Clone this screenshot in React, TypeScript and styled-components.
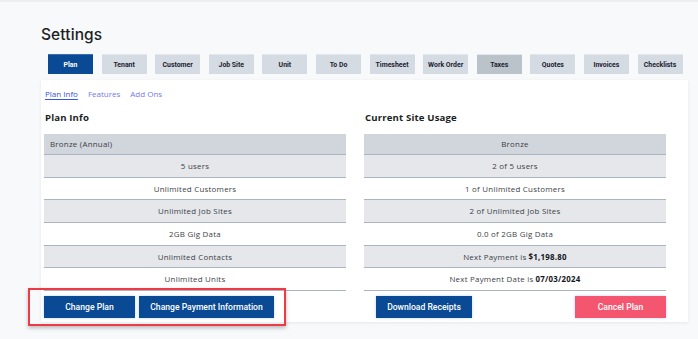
import React from "react";
import styled, { createGlobalStyle } from "styled-components";

const Global = createGlobalStyle`
  html, body { margin: 0; padding: 0; background: #f8f9fb; }
  body { font-family: "Open Sans", sans-serif; }
`;

const Page = styled.div`
  width: 698px;
  height: 339px;
  box-sizing: border-box;
  border-top: 2px solid #eceef2;
  padding: 23px 10px 0 41px;
  overflow: hidden;
`;

const Title = styled.h1`
  margin: 0;
  font-family: Inter, sans-serif;
  font-weight: 500;
  font-size: 15.5px;
  line-height: 20px;
  color: #1c1f24;
  letter-spacing: 0.1px;
`;

const TabBar = styled.div`
  display: flex;
  gap: 8.6px;
  margin: 9px 0 0 7px;
`;

const Tab = styled.div<{ $active?: boolean; $dim?: boolean }>`
  width: 45px;
  height: 20px;
  box-sizing: border-box;
  display: flex;
  align-items: center;
  justify-content: center;
  font-family: Roboto, sans-serif;
  font-weight: 700;
  font-size: 6.9px;
  color: ${(p) => (p.$active ? "#ffffff" : "#1d2230")};
  background: ${(p) => (p.$active ? "#0a4a94" : p.$dim ? "#bac2ca" : "#d4dbe2")};
  border-top: 1px solid ${(p) => (p.$active ? "#3b6db0" : "#e2e7ec")};
  white-space: nowrap;
`;

const Card = styled.div`
  margin-top: 6px;
  width: 647px;
  height: 242px;
  box-sizing: border-box;
  background: #ffffff;
  box-shadow: 0 1px 3px rgba(0, 0, 0, 0.08);
  padding: 6px 22px 0 3px;
  display: flex;
  flex-direction: column;
`;

const SubTabs = styled.div`
  display: flex;
  gap: 10px;
  padding-left: 1px;
  height: 14px;
  align-items: center;
`;

const SubTab = styled.span<{ $active?: boolean }>`
  font-family: "Open Sans", sans-serif;
  font-size: 8px;
  color: ${(p) => (p.$active ? "#3554e6" : "#7279ee")};
  text-decoration: ${(p) => (p.$active ? "underline" : "none")};
  text-underline-offset: 1.5px;
`;

const Columns = styled.div<{ $top: number }>`
  display: grid;
  grid-template-columns: 302px 302px;
  column-gap: 18px;
  margin-top: ${(p) => p.$top}px;
`;

const Column = styled.div`
  display: flex;
  flex-direction: column;
`;

const Heading = styled.h2`
  margin: 0 0 0 1px;
  font-family: "Open Sans", sans-serif;
  font-weight: 700;
  font-size: 9.6px;
  letter-spacing: 0.15px;
  line-height: 14px;
  color: #1b1e23;
  height: 23px;
`;

const Table = styled.div`
  display: flex;
  flex-direction: column;
`;

const Row = styled.div<{ $tone: "head" | "gray" | "white"; $left?: boolean }>`
  height: 22.7px;
  box-sizing: border-box;
  display: flex;
  align-items: center;
  justify-content: ${(p) => (p.$left ? "flex-start" : "center")};
  padding: 0 6px;
  font-family: "Open Sans", sans-serif;
  font-size: 7.9px;
  letter-spacing: 0.25px;
  color: #3b3f46;
  background: ${(p) => (p.$tone === "head" ? "#d1d5dc" : p.$tone === "gray" ? "#e5e7eb" : "#ffffff")};
  border-bottom: 1px solid #a9b5c1;
  &:first-child {
    height: 21px;
  }
  b {
    color: #15181d;
    font-weight: 700;
    margin-left: 2px;
  }
`;

const Group = styled.div`
  position: relative;
  display: flex;
  gap: 4px;
  align-self: start;
  justify-self: start;
`;

const Highlight = styled.div`
  position: absolute;
  left: -16px;
  right: -12px;
  top: -8px;
  bottom: -8px;
  border: 2px solid #ee3a44;
  box-shadow: 0 2px 4px rgba(0, 0, 0, 0.25);
  pointer-events: none;
`;

const Button = styled.button<{ $w: number; $danger?: boolean }>`
  width: ${(p) => p.$w}px;
  height: 22px;
  border: none;
  padding: 0;
  font-family: Roboto, sans-serif;
  font-weight: 500;
  font-size: 8.6px;
  color: #ffffff;
  background: ${(p) => (p.$danger ? "#f4566f" : "#0a4a94")};
  box-shadow: 0 0 3px rgba(120, 170, 230, 0.45);
  white-space: nowrap;
  cursor: pointer;
`;

const RightButtons = styled.div`
  display: flex;
  justify-content: space-between;
  width: 302px;
  padding-left: 12px;
  box-sizing: border-box;
`;

const tabs = [
  "Plan",
  "Tenant",
  "Customer",
  "Job Site",
  "Unit",
  "To Do",
  "Timesheet",
  "Work Order",
  "Taxes",
  "Quotes",
  "Invoices",
  "Checklists",
];

const tones: ("head" | "gray" | "white")[] = ["head", "gray", "white", "gray", "white", "gray", "white"];

const planRows: React.ReactNode[] = [
  "Bronze (Annual)",
  "5 users",
  "Unlimited Customers",
  "Unlimited Job Sites",
  "2GB Gig Data",
  "Unlimited Contacts",
  "Unlimited Units",
];

const usageRows: React.ReactNode[] = [
  "Bronze",
  "2 of 5 users",
  "1 of Unlimited Customers",
  "2 of Unlimited Job Sites",
  "0.0 of 2GB Gig Data",
  <>
    Next Payment is <b>$1,198.80</b>
  </>,
  <>
    Next Payment Date is <b>07/03/2024</b>
  </>,
];

export default function App() {
  return (
    <>
      <Global />
      <Page>
        <Title>Settings</Title>
        <TabBar>
          {tabs.map((t) => (
            <Tab key={t} $active={t === "Plan"} $dim={t === "Taxes"}>
              {t}
            </Tab>
          ))}
        </TabBar>
        <Card>
          <SubTabs>
            <SubTab $active>Plan Info</SubTab>
            <SubTab>Features</SubTab>
            <SubTab>Add Ons</SubTab>
          </SubTabs>
          <Columns $top={11}>
            <Column>
              <Heading>Plan Info</Heading>
              <Table>
                {planRows.map((r, i) => (
                  <Row key={i} $tone={tones[i]} $left={i === 0}>
                    {r}
                  </Row>
                ))}
              </Table>
            </Column>
            <Column>
              <Heading>Current Site Usage</Heading>
              <Table>
                {usageRows.map((r, i) => (
                  <Row key={i} $tone={tones[i]}>
                    {r}
                  </Row>
                ))}
              </Table>
            </Column>
          </Columns>
          <Columns $top={5}>
            <Group>
              <Button $w={91}>Change Plan</Button>
              <Button $w={135}>Change Payment Information</Button>
              <Highlight />
            </Group>
            <RightButtons>
              <Button $w={96}>Download Receipts</Button>
              <Button $w={91} $danger>
                Cancel Plan
              </Button>
            </RightButtons>
          </Columns>
        </Card>
      </Page>
    </>
  );
}
